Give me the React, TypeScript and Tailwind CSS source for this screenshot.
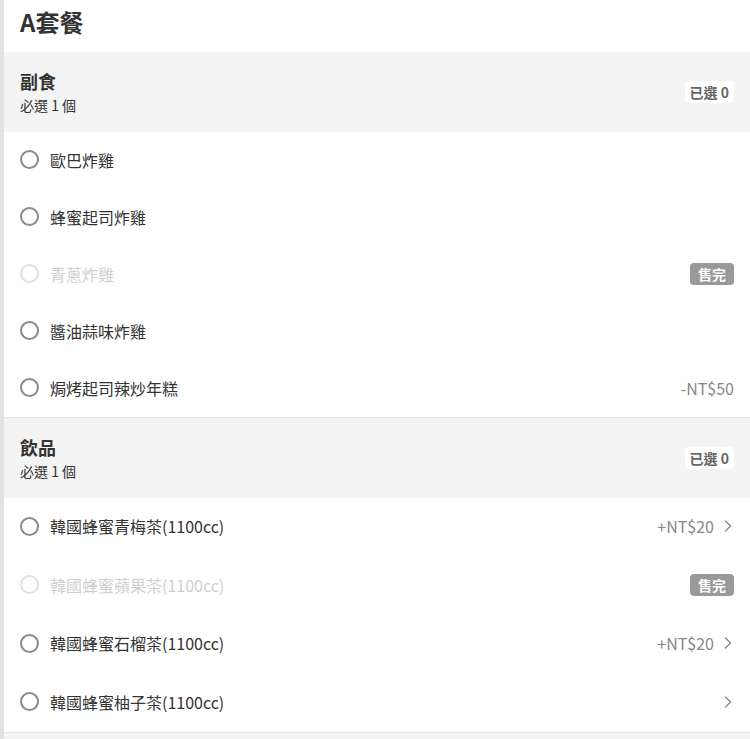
import { ChevronRight } from "lucide-react";

type Item = {
  name: string;
  price?: string;
  soldOut?: boolean;
  arrow?: boolean;
};

const groups: { title: string; rule: string; rowH: string; items: Item[] }[] = [
  {
    title: "副食",
    rule: "必選 1 個",
    rowH: "h-[57px]",
    items: [
      { name: "歐巴炸雞" },
      { name: "蜂蜜起司炸雞" },
      { name: "青蔥炸雞", soldOut: true },
      { name: "醬油蒜味炸雞" },
      { name: "焗烤起司辣炒年糕", price: "-NT$50" },
    ],
  },
  {
    title: "飲品",
    rule: "必選 1 個",
    rowH: "h-[58.5px]",
    items: [
      { name: "韓國蜂蜜青梅茶(1100cc)", price: "+NT$20", arrow: true },
      { name: "韓國蜂蜜蘋果茶(1100cc)", soldOut: true },
      { name: "韓國蜂蜜石榴茶(1100cc)", price: "+NT$20", arrow: true },
      { name: "韓國蜂蜜柚子茶(1100cc)", arrow: true },
    ],
  },
];

const font = { fontFamily: '"Noto Sans CJK TC", "Noto Sans", sans-serif' };

export default function App() {
  return (
    <div
      className="min-h-[739px] w-[750px] border-l-4 border-[#e2e2e2] bg-[#f4f4f4]"
      style={font}
    >
      <div className="bg-white">
        <h1 className="flex h-[52px] items-center px-4 pb-2 text-2xl font-bold text-[#333]">
          A套餐
        </h1>

        {groups.map((g) => (
          <section key={g.title} className="border-b border-[#e6e6e6]">
            <div className="flex h-[80px] items-center justify-between bg-[#f4f4f4] px-4">
              <div className="flex flex-col pb-[2px]">
                <span className="text-lg leading-[27px] font-bold text-[#333]">
                  {g.title}
                </span>
                <span className="text-sm leading-[20px] text-[#333]">
                  {g.rule}
                </span>
              </div>
              <span className="rounded bg-white px-[5px] py-[1px] text-sm font-bold text-[#666]">
                已選 0
              </span>
            </div>

            <ul>
              {g.items.map((it) => (
                <li
                  key={it.name}
                  className={`flex ${g.rowH} items-center px-4 pb-[2px]`}
                >
                  <span
                    className={`h-[19px] w-[19px] rounded-full border-2 ${
                      it.soldOut ? "border-[#e0e0e0]" : "border-[#8a8a8a]"
                    }`}
                  />
                  <span
                    className={`ml-[11px] flex-1 text-base ${
                      it.soldOut ? "text-[#d0d0d0]" : "text-[#333]"
                    }`}
                  >
                    {it.name}
                  </span>
                  {it.soldOut && (
                    <span className="rounded bg-[#999] px-2 py-[1px] text-sm font-bold text-white">
                      售完
                    </span>
                  )}
                  {it.price && (
                    <span className="text-base text-[#888]">{it.price}</span>
                  )}
                  {it.arrow && (
                    <ChevronRight
                      className="ml-1 -mr-1 h-5 w-5 text-[#888]"
                      strokeWidth={1.5}
                    />
                  )}
                </li>
              ))}
            </ul>
          </section>
        ))}
      </div>
    </div>
  );
}
